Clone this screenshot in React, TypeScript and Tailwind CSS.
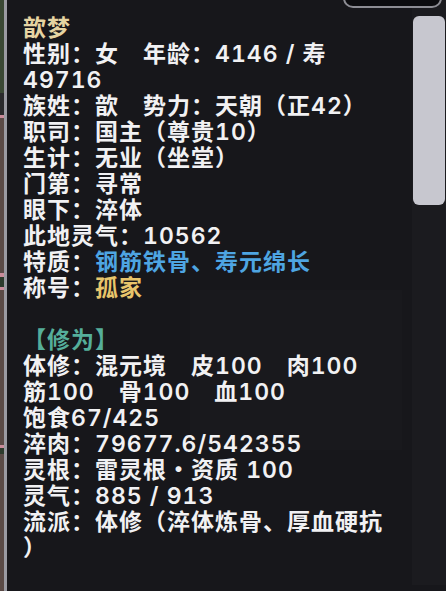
import React from "react";

const W = "text-[#f1f1f3]";

function Line({ children, className = "" }: { children: React.ReactNode; className?: string }) {
  return <div className={`${W} ${className}`}>{children}</div>;
}

export default function App() {
  return (
    <div
      className="relative flex h-[591px] w-[446px] overflow-hidden bg-[#17171b]"
      style={{ fontFamily: '"Inter", "Noto Sans CJK SC", "Noto Sans", sans-serif' }}
    >
      {/* left strip of underlying scene */}
      <div className="flex w-[4px] flex-col">
        <div className="h-[93px] bg-[#3a4834]" />
        <div className="h-[22px] bg-[#2a2a2c]" />
        <div className="h-[3px] bg-[#c98b9a]" />
        <div className="h-[155px] bg-[#5a4a46]" />
        <div className="h-[4px] bg-[#c98b9a]" />
        <div className="h-[10px] bg-[#2c3a2c]" />
        <div className="h-[3px] bg-[#c98b9a]" />
        <div className="h-[155px] bg-[#5a4a46]" />
        <div className="h-[3px] bg-[#c98b9a]" />
        <div className="h-[6px] bg-[#2c3a2c]" />
        <div className="flex-1 bg-[#5a4a46]" />
      </div>
      <div className="w-[3px] bg-[#9a9aa2]" />

      {/* faint watermark box */}
      <div className="absolute left-[190px] top-[290px] h-[160px] w-[212px] bg-white/[0.01]" />

      {/* content */}
      <div className="relative flex-1 pl-[16px] pr-[12px] pt-[15px] text-[23px] font-semibold leading-[26px] tracking-[1px] tabular-nums">
        <div className="text-[#e6d4a2]">歆梦</div>
        <Line>
          性别：女　年龄：4146 / 寿
          <br />
          49716
        </Line>
        <Line>族姓：歆　势力：天朝（正42）</Line>
        <Line>职司：国主（尊贵10）</Line>
        <Line>生计：无业（坐堂）</Line>
        <Line>门第：寻常</Line>
        <Line>眼下：淬体</Line>
        <Line>此地灵气：10562</Line>
        <Line>
          特质：<span className="text-[#4ea5e2]">钢筋铁骨、寿元绵长</span>
        </Line>
        <Line>
          称号：<span className="text-[#e8c56b]">孤家</span>
        </Line>
        <div className="h-[26px]" />
        <div className="text-[#55ae9a]">【修为】</div>
        <Line>体修：混元境　皮100　肉100</Line>
        <Line>筋100　骨100　血100</Line>
        <Line>饱食67/425</Line>
        <Line>淬肉：79677.6/542355</Line>
        <Line>灵根：雷灵根・资质 100</Line>
        <Line>灵气：885 / 913</Line>
        <Line>
          流派：体修（淬体炼骨、厚血硬抗
          <br />）
        </Line>
      </div>

      {/* scrollbar */}
      <div className="flex w-[34px] flex-col pb-[6px]">
        <div className="flex flex-1 flex-col bg-[#1b1b1f] pl-[1px] pr-[1px] pt-[16px]">
          <div className="h-[189px] rounded-[6px] bg-[#c7c7cf]" />
        </div>
      </div>

      {/* top-right button edge */}
      <div className="absolute left-[343px] top-[-20px] h-[28px] w-[99px] rounded-[10px] border-2 border-[#8d8d94] bg-[#0c0c0f]" />
    </div>
  );
}
